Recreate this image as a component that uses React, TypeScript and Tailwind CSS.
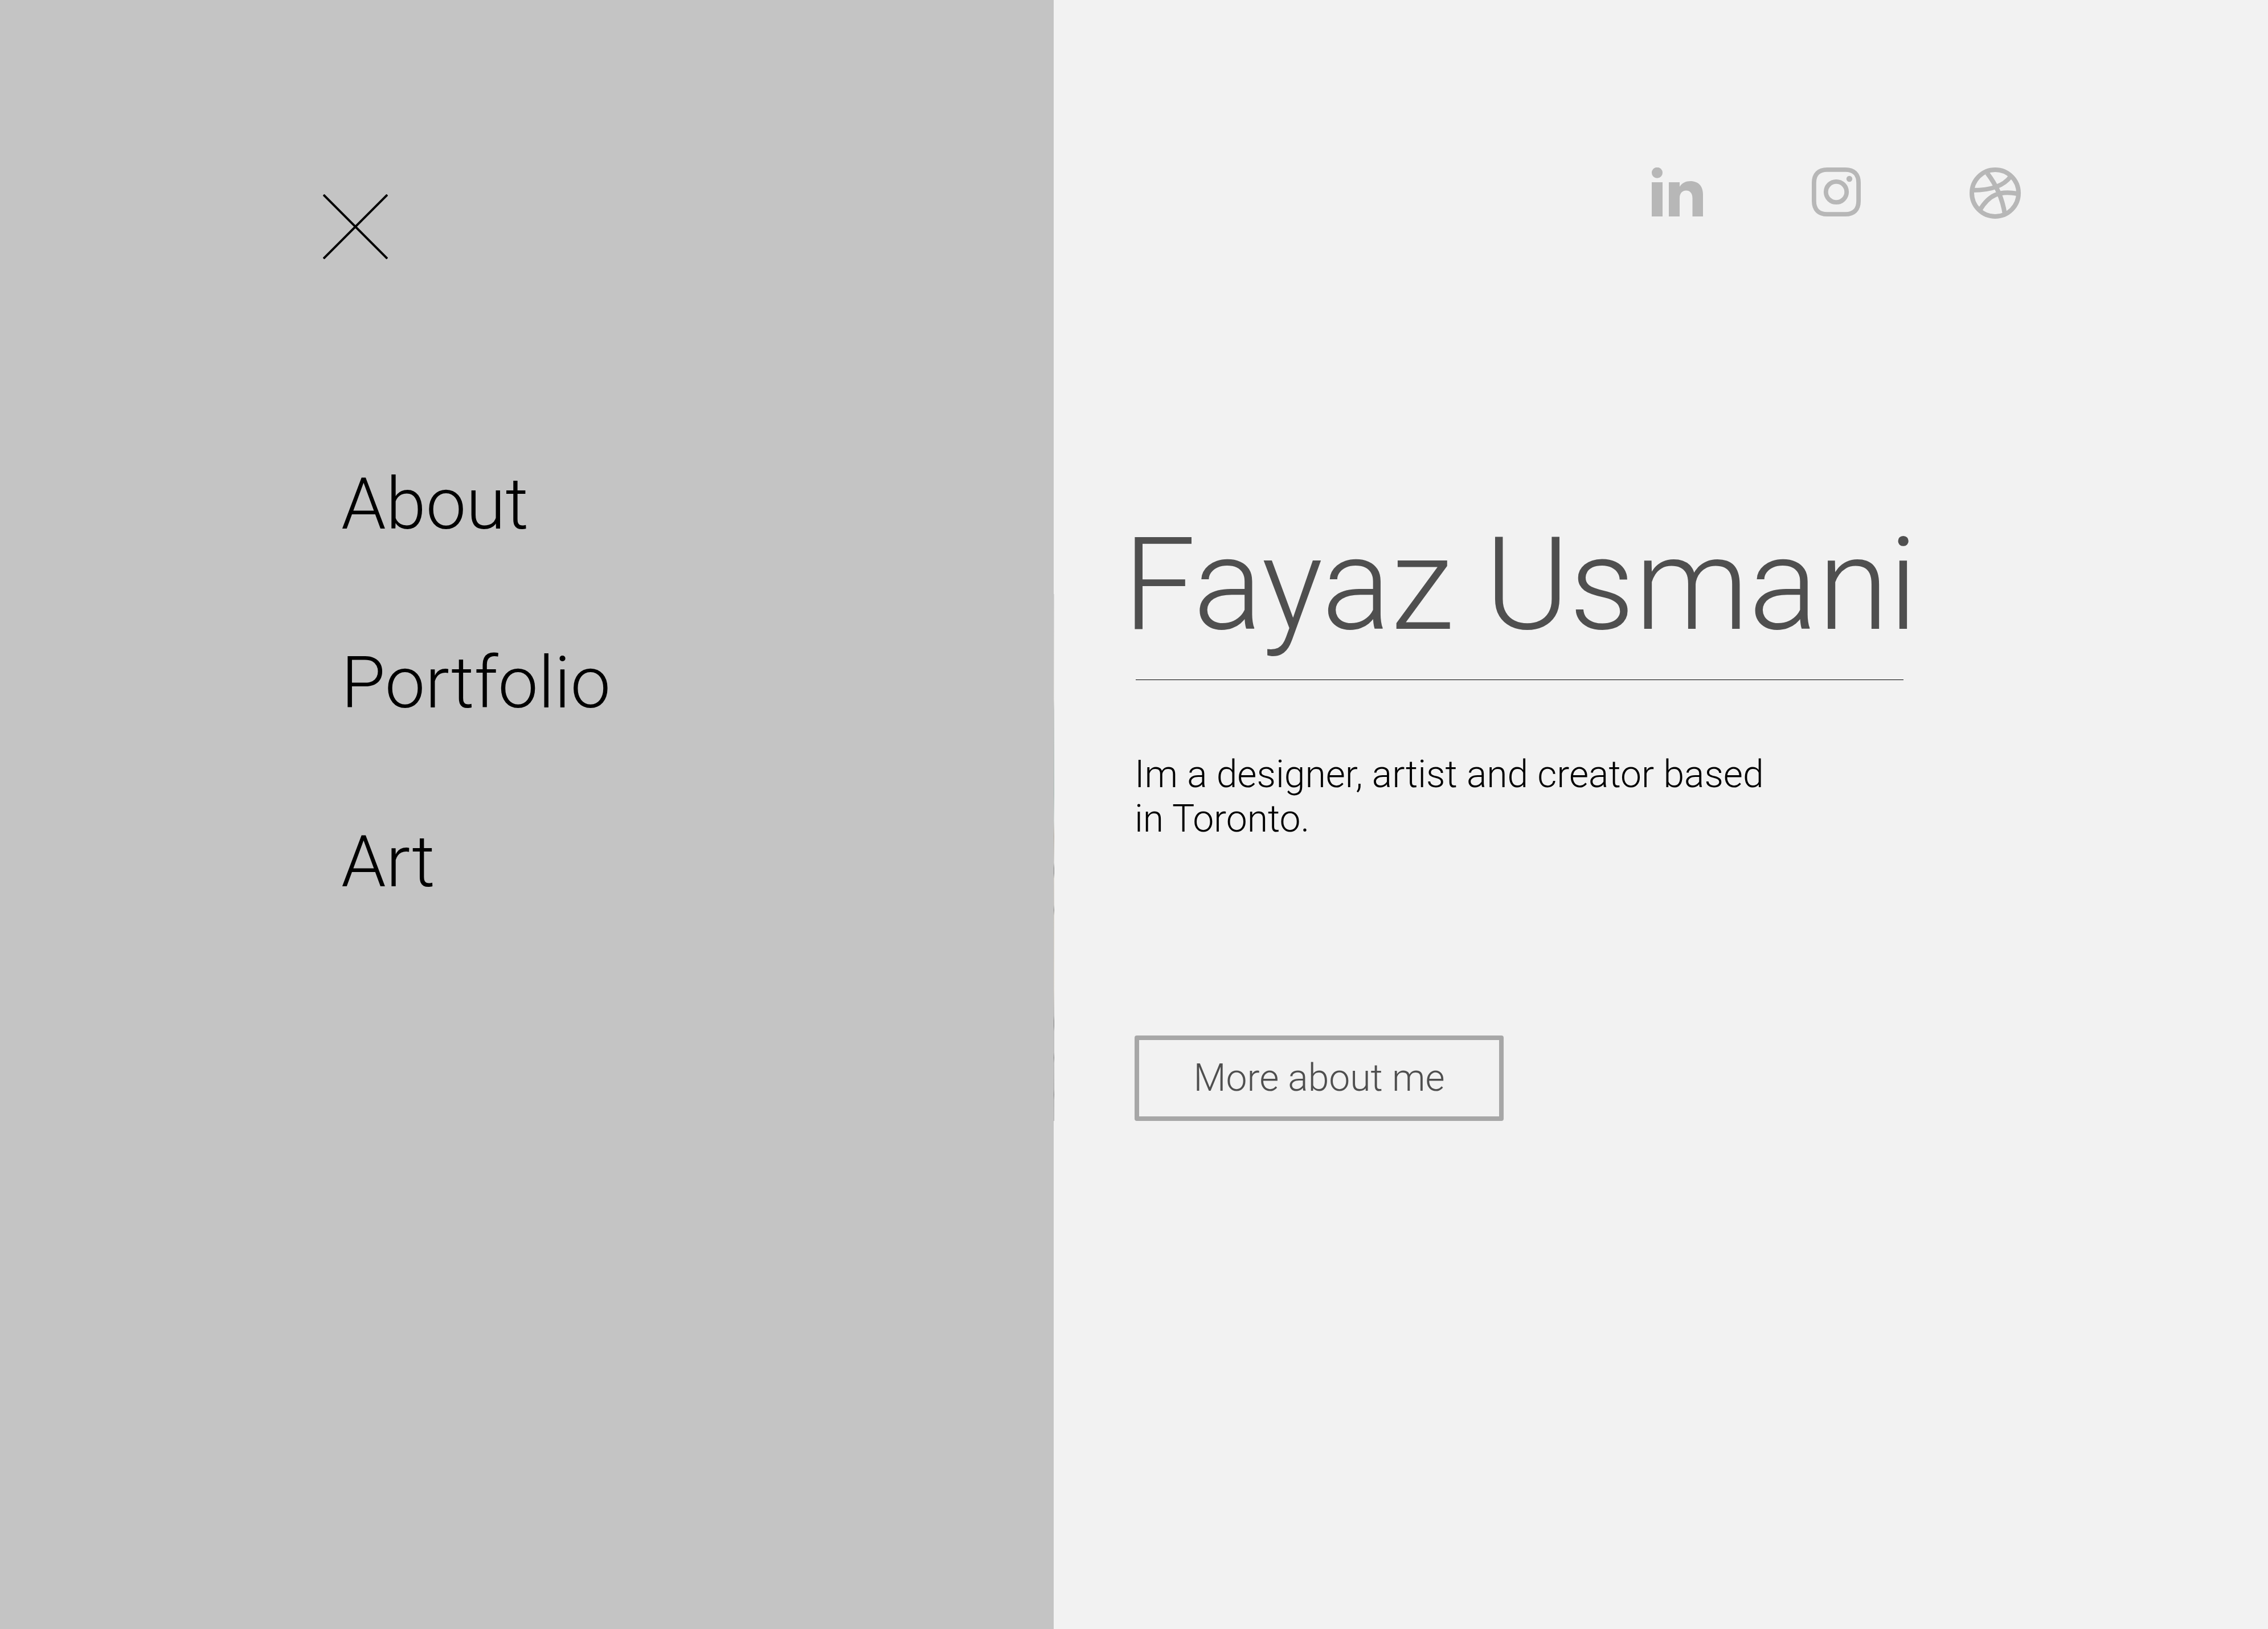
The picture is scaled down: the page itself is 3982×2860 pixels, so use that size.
const social = [
  { label: "LinkedIn", icon: <LinkedIn /> },
  { label: "Instagram", icon: <Instagram /> },
  { label: "Dribbble", icon: <Dribbble /> },
];

function LinkedIn() {
  return (
    <svg className="block h-[90px] w-[90px]" viewBox="0 0 90 90" fill="currentColor" aria-hidden="true">
      <circle cx="9.5" cy="9.2" r="9.5" />
      <path d="M0 26H19V86H0Z" />
      <path d="M30 26H49V34C53 27 60 24 68 24C82 24 90 33 90 47V86H71.500V54C71.500 45 67 40.500 60.500 40.500C53 40.500 49 46 49 54V86H30Z" />
    </svg>
  );
}

function Instagram() {
  return (
    <svg className="block h-[86px] w-[86px]" viewBox="0 0 86 86" fill="none" stroke="currentColor" strokeWidth="7.8" aria-hidden="true">
      <path d="M27 3.900H59C74 3.900 82.100 12 82.100 27V59C82.100 74 74 82.100 59 82.100H27C12 82.100 3.900 74 3.900 59V27C3.900 12 12 3.900 27 3.900Z" />
      <circle cx="43" cy="43" r="18.2" />
      <circle cx="66" cy="20" r="5.200" fill="currentColor" stroke="none" />
    </svg>
  );
}

function Dribbble() {
  return (
    <svg className="block h-[90px] w-[90px]" viewBox="0 0 90 90" fill="none" stroke="currentColor" strokeWidth="8" aria-hidden="true">
      <circle cx="45" cy="45" r="41" />
      <path d="M31 10C45 28 57 50 62 82" />
      <path d="M6 40C33 40 58 35 72 16" />
      <path d="M18 75C34 48 53 40 84 46" />
    </svg>
  );
}

export default function App() {
  return (
    <div className="grid min-h-screen grid-cols-[1850fr_2132fr] bg-[#f2f2f2] font-['Roboto',sans-serif] font-light text-black">
      <aside className="relative bg-[#c4c4c4] px-[567px] pt-[341px]">
        <button type="button" aria-label="Close menu" className="block">
          <svg className="block h-[114px] w-[114px]" viewBox="0 0 114 114" stroke="black" strokeWidth="4" aria-hidden="true">
            <path d="M1 1L113 113M113 1L1 113" />
          </svg>
        </button>
        <nav className="mt-[355px] flex flex-col items-start gap-[164px] pl-8 text-[126px] leading-[150px]">
          <a href="#about">About</a>
          <a href="#portfolio">Portfolio</a>
          <a href="#art">Art</a>
        </nav>
        <div className="absolute top-[1043px] left-full h-[925px] w-px bg-[linear-gradient(#d8d8d8,#e6e4e0_20%,#c4c8c6_22%,#a9b8b3_38%,#d5dbd8_43%,#b5aca0_46%,#d6d6d4_51%,#858585_52%,#858585_53%,#dcd6cc_54%,#d0cdc8_59%,#888_60%,#d6d0c6_61%,#dcd6cc_75%,#b4b4b4_80%,#808080_81%,#808080_82%,#b8b8b8_83%,#b8b8b8_87%,#7c7c7c_88%,#b4b4b4_89%,#a4a4a4_94%,#7c7c7c_95%,#a8a8a8_96%,#b0b0b0)]" />
      </aside>
      <main className="pl-[142px]">
        <ul className="mt-[294px] mr-[434px] flex h-[90px] justify-end gap-[191px] text-[#b7b7b7]">
          {social.map((s) => (
            <li key={s.label}>
              <a href={"#" + s.label.toLowerCase()} aria-label={s.label} className="block">
                {s.icon}
              </a>
            </li>
          ))}
        </ul>
        <h1 className="mt-[511px] -ml-5 text-[226px] leading-[264px] whitespace-nowrap text-[#4f4f4f]">Fayaz Usmani</h1>
        <hr className="mt-[34px] ml-[2px] w-[1348px] border-t border-black" />
        <p className="mt-[127px] w-[1140px] text-[66px] leading-[78px]">Im a designer, artist and creator based in Toronto.</p>
        <button type="button" className="mt-[341px] block h-[150px] w-[648px] rounded border-8 border-[#a7a7a7] text-[66px] leading-[78px] text-[#4f4f4f]">
          More about me
        </button>
      </main>
    </div>
  );
}
